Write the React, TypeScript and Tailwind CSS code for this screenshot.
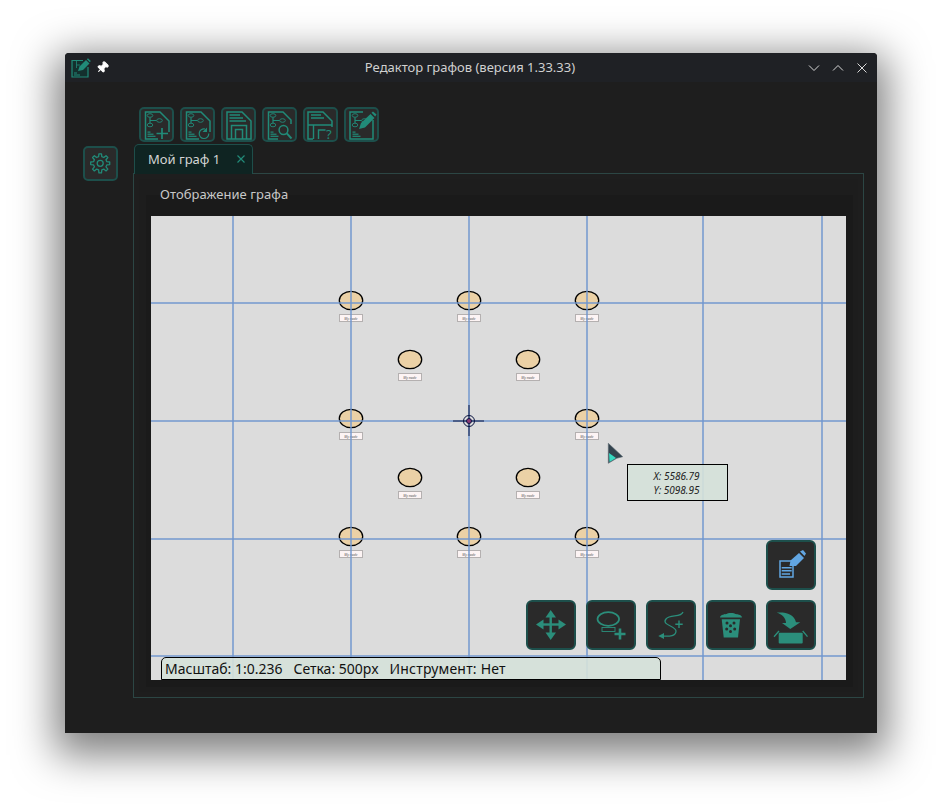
import React from 'react';
import { Pin } from 'lucide-react';

const TEAL = '#218a78';
const BIG = '#2b8e7b';
const BLUE = '#62a6e2';
const VLINES = [82, 200, 318, 436, 552, 671];
const HLINES = [87, 205, 323, 440];
const NODES = [
  [200, 85], [318, 85], [436, 85],
  [259, 144], [377, 144],
  [200, 203], [436, 203],
  [259, 262], [377, 262],
  [200, 321], [318, 321], [436, 321],
];

const Doc: React.FC<{ d?: string }> = ({ d = 'M19 32H6.5V5H21L30 14V25' }) => (
  <path d={d} fill="none" stroke={TEAL} strokeWidth="1.5" />
);

const Graph = () => (
  <g fill="none" stroke={TEAL} strokeWidth="0.9">
    <ellipse cx="11" cy="8.5" rx="2.8" ry="1.8" />
    <ellipse cx="11" cy="18" rx="2.8" ry="1.8" />
    <ellipse cx="20.5" cy="13.5" rx="2.8" ry="1.8" />
    <path d="M11 10.5V16M11 13.5H17.5" strokeWidth="1.2" />
  </g>
);

const Lines = () => (
  <g fill={TEAL}>
    <rect x="8.5" y="24.5" width="3" height="1.2" />
    <rect x="8.5" y="26.6" width="6" height="1.2" />
    <rect x="8.5" y="28.7" width="8" height="1.2" />
  </g>
);

const ToolbarIcons: React.ReactNode[] = [
  <>
    <Doc /><Graph /><Lines />
    <path d="M23 21V32M17.5 26.5H29" stroke={TEAL} strokeWidth="1.7" />
  </>,
  <>
    <Doc /><Graph /><Lines />
    <path d="M25 22A4.8 4.8 0 1 0 28.8 26.5" fill="none" stroke={TEAL} strokeWidth="1.2" />
    <path d="M27 20.5V25H22.5Z" fill={TEAL} />
  </>,
  <>
    <path d="M6 32V5H21L30 14V32Z" fill="none" stroke={TEAL} strokeWidth="1.5" />
    <path d="M8.5 8H19M8.5 11H22M8.5 14H25" stroke={TEAL} strokeWidth="1.3" />
    <path d="M10.5 32V18.5H25.5V32M14.5 32V22.5H21.5V32" fill="none" stroke={TEAL} strokeWidth="1.5" />
  </>,
  <>
    <Doc d="M16 32H6.5V5H21L29 13V17" /><Graph /><Lines />
    <circle cx="21.5" cy="23" r="4.4" fill="none" stroke={TEAL} strokeWidth="1.5" />
    <path d="M24.8 26.3L29.5 31.5" stroke={TEAL} strokeWidth="2" />
  </>,
  <>
    <Doc d="M10 32H5V5H20L29 14V20" />
    <path d="M8 8H18M8 11H21" stroke={TEAL} strokeWidth="1.3" />
    <path d="M5 18H29M10.5 32V18.5M15.5 32V23H22.5" fill="none" stroke={TEAL} strokeWidth="1.4" />
    <text x="23" y="32" fontSize="13" fill={TEAL} fontFamily="'Noto Sans', sans-serif">?</text>
  </>,
  <>
    <Doc d="M19 5H6V32H29V13" /><Graph /><Lines />
    <path d="M15 22L17 16L26.5 7L30.5 11L21 20.5Z" fill={TEAL} />
    <path d="M27.5 5.8L29 4.5L32.5 7.5L31.2 9.5Z" fill={TEAL} />
  </>,
];

const gearPath = () => {
  const cx = 17.2;
  const cy = 17.3;
  const teeth = 8;
  const pts: string[] = [];
  for (let i = 0; i < teeth; i++) {
    const a = (i * 2 * Math.PI) / teeth;
    const step = (2 * Math.PI) / teeth;
    const add = (r: number, t: number) =>
      pts.push(`${(cx + r * Math.cos(a + t * step)).toFixed(2)} ${(cy + r * Math.sin(a + t * step)).toFixed(2)}`);
    add(6.8, -0.3);
    add(9.6, -0.17);
    add(9.6, 0.17);
    add(6.8, 0.3);
  }
  return `M${pts.join('L')}Z`;
};

const ToolButton: React.FC<{ children: React.ReactNode }> = ({ children }) => (
  <button className="w-[35px] h-[35px] rounded-[5px] border-2 border-[#1d4f4b] bg-[#2a2a2a] shrink-0 relative">
    <svg viewBox="0 0 35 35" width="35" height="35" className="absolute -left-[2px] -top-[2px]">
      {children}
    </svg>
  </button>
);

const BigButton: React.FC<{ children: React.ReactNode }> = ({ children }) => (
  <button className="w-[50px] h-[50px] rounded-[6px] border-2 border-[#1d4f4b] bg-[#2a2a2a] relative shrink-0">
    <svg viewBox="0 0 50 50" width="50" height="50" className="absolute -left-[2px] -top-[2px]">
      {children}
    </svg>
  </button>
);

const App: React.FC = () => {
  return (
    <div className="h-[810px] overflow-hidden bg-white pl-[65px] pt-[53px] font-['Noto_Sans',sans-serif]">
      <div className="w-[812px] h-[680px] flex flex-col bg-[#1e1e1e] rounded-t-[4px] shadow-[0_12px_40px_10px_rgba(0,0,0,0.5)]">
        {/* title bar */}
        <div className="h-[29px] shrink-0 bg-[#1f2125] rounded-t-[4px] flex items-center pl-[6px] pr-[8px]">
          <div className="w-[60px] flex items-center shrink-0">
            <svg viewBox="0 0 20 20" width="20" height="20">
              <path d="M12 2.5H1V19H17V9" fill="#14302e" stroke={TEAL} strokeWidth="1.2" />
              <path d="M5.5 2.5V10M5.5 7H9" stroke={TEAL} strokeWidth="0.8" />
              <path d="M7 13L8.5 8.5L15 2L18.5 5.5L12 12Z" fill={TEAL} />
              <path d="M15.8 1.2L17 0.2L19.8 3L18.8 4.2Z" fill={TEAL} />
              <path d="M3 15H6M3 17H9" stroke={TEAL} />
            </svg>
            <Pin size={13} className="ml-[5px] rotate-45 text-white" fill="white" />
          </div>
          <div className="flex-1 text-center text-[13px] text-[#d0d0d0]">Редактор графов (версия 1.33.33)</div>
          <div className="w-[60px] flex items-center justify-end gap-[10px] shrink-0">
            <svg width="14" height="14" viewBox="0 0 14 14" className="shrink-0"><path d="M2 4.5L7 9.5L12 4.5" fill="none" stroke="#d8d8d8" /></svg>
            <svg width="14" height="14" viewBox="0 0 14 14" className="shrink-0"><path d="M2 9.5L7 4.5L12 9.5" fill="none" stroke="#d8d8d8" /></svg>
            <svg width="14" height="14" viewBox="0 0 14 14" className="shrink-0"><path d="M2.5 2.5L11.5 11.5M11.5 2.5L2.5 11.5" fill="none" stroke="#d8d8d8" /></svg>
          </div>
        </div>

        {/* body */}
        <div className="flex-1 flex pl-[18px] pr-[13px] pb-[35px]">
          <div className="w-[50px] shrink-0 pt-[64px]">
            <ToolButton>
              <path d={gearPath()} fill="none" stroke={TEAL} strokeWidth="1.3" strokeLinejoin="round" />
              <circle cx="17.2" cy="17.3" r="3" fill="none" stroke={TEAL} strokeWidth="1.3" />
            </ToolButton>
          </div>
          <div className="flex-1 flex flex-col min-w-0">
            <div className="flex gap-[6px] pl-[6px] pt-[25px] h-[62px] shrink-0">
              {ToolbarIcons.map((icon, i) => (
                <ToolButton key={i}>{icon}</ToolButton>
              ))}
            </div>
            <div className="h-[30px] w-[119px] ml-[1px] shrink-0 bg-[#0f2422] border border-b-0 border-[#1e4e4a] rounded-t-[5px] flex items-center pl-[13px] pr-[6px] relative z-10 -mb-[1px]">
              <span className="text-[13px] text-[#d4d4d4] flex-1">Мой граф 1</span>
              <svg width="10" height="10" viewBox="0 0 10 10" className="-mt-[2px]"><path d="M1.5 1.5L8.5 8.5M8.5 1.5L1.5 8.5" stroke={TEAL} strokeWidth="1.2" /></svg>
            </div>
            {/* frame */}
            <div className="flex-1 border border-[#2c4644] p-[5px] min-h-0">
              <div className="h-full bg-[#1d1d1d] pt-[16px] pl-[7px] pr-[5px] pb-[5px] relative">
                <span className="absolute left-[21px] top-[6px] z-10 text-[13px] tracking-[0.06px] text-[#c8c8c8]">Отображение графа</span>
                <div className="h-full bg-[#1a1a1a] pt-[21px] px-[5px] pb-[6px]">
                  {/* canvas */}
                  <div className="relative w-[695px] h-[464px] bg-[#dcdcdc] overflow-hidden">
                    <svg width="695" height="464" className="absolute left-0 top-0">
                      {NODES.map(([x, y]) => (
                        <g key={`${x}-${y}`}>
                          <ellipse cx={x} cy={y - 0.5} rx="11.7" ry="9.2" fill="#ebd1a6" stroke="#000" strokeWidth="1.3" />
                          <rect x={x - 11.5} y={y + 13.5} width="23" height="7" fill="#fdf4f4" stroke="#b4b0b0" />
                          <text x={x} y={y + 18.5} fontSize="3.5" textAnchor="middle" fill="#555" fontStyle="italic">My node</text>
                        </g>
                      ))}
                      {VLINES.map((x) => (
                        <line key={x} x1={x} y1="0" x2={x} y2="464" stroke="#6f96cf" strokeOpacity="0.72" strokeWidth="2" />
                      ))}
                      {HLINES.map((y) => (
                        <line key={y} x1="0" y1={y} x2="695" y2={y} stroke="#6f96cf" strokeOpacity="0.72" strokeWidth="2" />
                      ))}
                      {/* origin marker */}
                      <g fill="none" stroke="#0a1440" strokeWidth="1">
                        <path d="M302 205H333M318 189V220" />
                        <circle cx="318" cy="205" r="5.5" />
                        <circle cx="318" cy="205" r="2.5" fill="#8a3a78" />
                      </g>
                      {/* cursor */}
                      <path d="M457.3 227.3L471.7 240.7L465.7 242.3L457.3 247.3Z" fill="#33434e" stroke="#5b6870" strokeWidth="0.6" />
                      <path d="M458 237L465 242L458.5 246Z" fill="#37d8c0" />
                    </svg>

                    <div className="absolute left-[476px] top-[248px] w-[101px] h-[37px] bg-[#d5e1d9]/90 border border-black pr-[2px] flex flex-col items-center justify-center text-[10px] leading-[14px] italic text-[#222]">
                      <span>X: 5586.79</span>
                      <span>Y: 5098.95</span>
                    </div>

                    <div className="absolute left-[10px] bottom-0 w-[500px] h-[23px] bg-[#d5e1d9]/90 border border-black rounded-t-[5px] pl-[3px] flex items-center text-[14px] text-[#111] whitespace-pre">
                      Масштаб: 1:0.236{'   '}Сетка: 500px{'   '}<span className="tracking-[0.2px]">Инструмент: Нет</span>
                    </div>

                    {/* floating tool buttons */}
                    <div className="absolute right-[30px] bottom-[30px] flex flex-col items-end gap-[10px]">
                      <BigButton>
                        <path d="M14 21H27V37H14Z" fill="none" stroke={BLUE} strokeWidth="1.5" />
                        <path d="M15.7 27.7H25.7M15.7 30.8H25.7M15.7 34H24" stroke={BLUE} strokeWidth="1.6" />
                        <path d="M23.5 26L24.5 20.5L33 13L38 18L30 26Z" fill={BLUE} />
                        <path d="M34 11.5L37 10L40 13.5L38.5 16Z" fill={BLUE} />
                      </BigButton>
                      <div className="flex gap-[10px]">
                        <BigButton>
                          <g fill={BIG}>
                            <path d="M24.7 10L30 17.5H19.5Z" />
                            <path d="M24.7 40L30 32.5H19.5Z" />
                            <path d="M10 24.5L17.5 19.5V29.5Z" />
                            <path d="M40 24.5L32.5 19.5V29.5Z" />
                            <rect x="23.5" y="14" width="2.4" height="22" />
                            <rect x="14" y="23.3" width="22" height="2.4" />
                          </g>
                        </BigButton>
                        <BigButton>
                          <ellipse cx="22.3" cy="19" rx="10.8" ry="6.8" fill="none" stroke={BIG} strokeWidth="1.7" />
                          <rect x="16" y="27.5" width="13" height="4" fill="none" stroke={BIG} strokeWidth="0.9" />
                          <path d="M34 28.5V39.5M28.5 34H39.5" stroke={BIG} strokeWidth="2.6" />
                        </BigButton>
                        <BigButton>
                          <path d="M37 12C35 18 24 14 20 19C15 25 30 26 30 31C30 37 22 36 15 36" fill="none" stroke={BIG} strokeWidth="1.3" />
                          <path d="M12.3 36L18 33V39Z" fill={BIG} />
                          <path d="M33 20.5V28M29.3 24.3H36.7" stroke={BIG} strokeWidth="1.4" />
                        </BigButton>
                        <BigButton>
                          <path d="M14 17.5C14 14.5 20 14 20.5 14C21 12.5 29 12.5 29.5 14C30 14 36 14.5 36 17.5Z" fill={BIG} />
                          <path d="M15.7 19.3H34L32 37.5H17.7Z" fill={BIG} />
                          <g fill="#2a2a2a">
                            <circle cx="21" cy="23" r="1.5" /><circle cx="28" cy="23" r="1.5" />
                            <circle cx="24.5" cy="25.8" r="1.5" /><circle cx="20.7" cy="29" r="1.5" />
                            <circle cx="28.7" cy="29" r="1.5" /><circle cx="24.5" cy="31.5" r="1.5" />
                          </g>
                        </BigButton>
                        <BigButton>
                          <path d="M10.7 12.7C20 12 28 14 30 22.3L34.3 22.3L24.3 29L16 23H20C20 18 16 14 10.7 12.7Z" fill={BIG} />
                          <rect x="12.7" y="32.7" width="24" height="10.8" rx="1" fill={BIG} />
                          <path d="M13 31L8 36.7M36.7 31L41.5 36.7" stroke={BIG} strokeWidth="1.3" />
                        </BigButton>
                      </div>
                    </div>
                  </div>
                </div>
              </div>
            </div>
          </div>
        </div>
      </div>
    </div>
  );
};

export default App;
